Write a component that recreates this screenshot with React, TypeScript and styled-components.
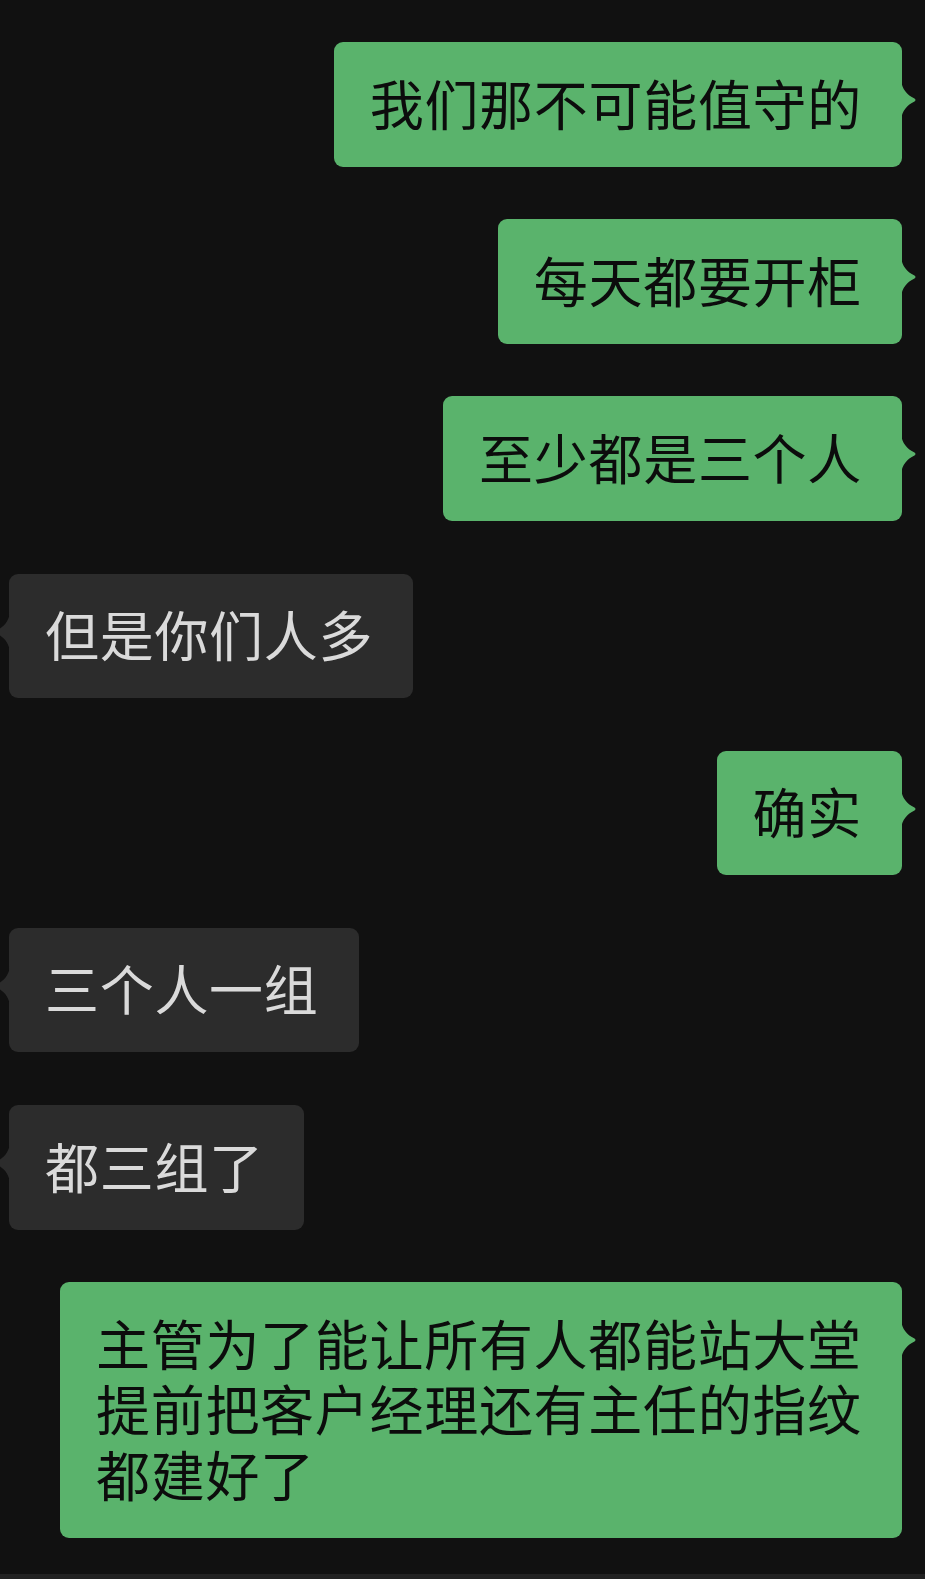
import React from "react";
import styled, { createGlobalStyle } from "styled-components";

type Side = "me" | "them";

const MESSAGES: { side: Side; text: string }[] = [
  { side: "me", text: "我们那不可能值守的" },
  { side: "me", text: "每天都要开柜" },
  { side: "me", text: "至少都是三个人" },
  { side: "them", text: "但是你们人多" },
  { side: "me", text: "确实" },
  { side: "them", text: "三个人一组" },
  { side: "them", text: "都三组了" },
  { side: "me", text: "主管为了能让所有人都能站大堂提前把客户经理还有主任的指纹都建好了" },
];

const COLORS = {
  bg: "#111111",
  green: "#5ab36c",
  gray: "#2c2c2c",
};

const GlobalStyle = createGlobalStyle`
  html, body {
    margin: 0;
    padding: 0;
    background: ${COLORS.bg};
  }
  body {
    font-family: "Noto Sans CJK SC", "Noto Sans", sans-serif;
  }
`;

const Screen = styled.div`
  width: 925px;
  height: 1579px;
  display: flex;
  flex-direction: column;
  background: ${COLORS.bg};
  overflow: hidden;
`;

const Thread = styled.div`
  flex: 1;
  display: flex;
  flex-direction: column;
  gap: 52.7px;
  padding: 42px 23px 0 9px;
`;

const Row = styled.div<{ $side: Side }>`
  display: flex;
  justify-content: ${({ $side }) => ($side === "me" ? "flex-end" : "flex-start")};
`;

const Bubble = styled.div<{ $side: Side }>`
  position: relative;
  max-width: 842px;
  box-sizing: border-box;
  padding: 27.5px 40px 31.5px 36px;
  border-radius: 9px;
  background: ${({ $side }) => ($side === "me" ? COLORS.green : COLORS.gray)};
  color: ${({ $side }) => ($side === "me" ? "#0c0c0c" : "#dadada")};
  font-size: 54px;
  letter-spacing: 0.7px;
  line-height: 65.5px;
  word-break: break-all;
`;

const Tail = styled.svg<{ $side: Side }>`
  position: absolute;
  top: 38px;
  width: 16px;
  height: 40px;
  ${({ $side }) => ($side === "me" ? "right: -15px;" : "left: -15px; transform: scaleX(-1);")}
`;

const BottomBar = styled.div`
  height: 5px;
  background: #222222;
`;

const App: React.FC = () => (
  <Screen>
    <GlobalStyle />
    <Thread>
      {MESSAGES.map((msg, i) => (
        <Row key={i} $side={msg.side}>
          <Bubble $side={msg.side}>
            <Tail $side={msg.side} viewBox="0 0 16 40">
              <path
                d="M0 0 C1 9 6 15 13.5 18.5 Q15.5 20 13.5 21.5 C6 25 1 31 0 40 Z"
                fill={msg.side === "me" ? COLORS.green : COLORS.gray}
              />
            </Tail>
            {msg.text}
          </Bubble>
        </Row>
      ))}
    </Thread>
    <BottomBar />
  </Screen>
);

export default App;
